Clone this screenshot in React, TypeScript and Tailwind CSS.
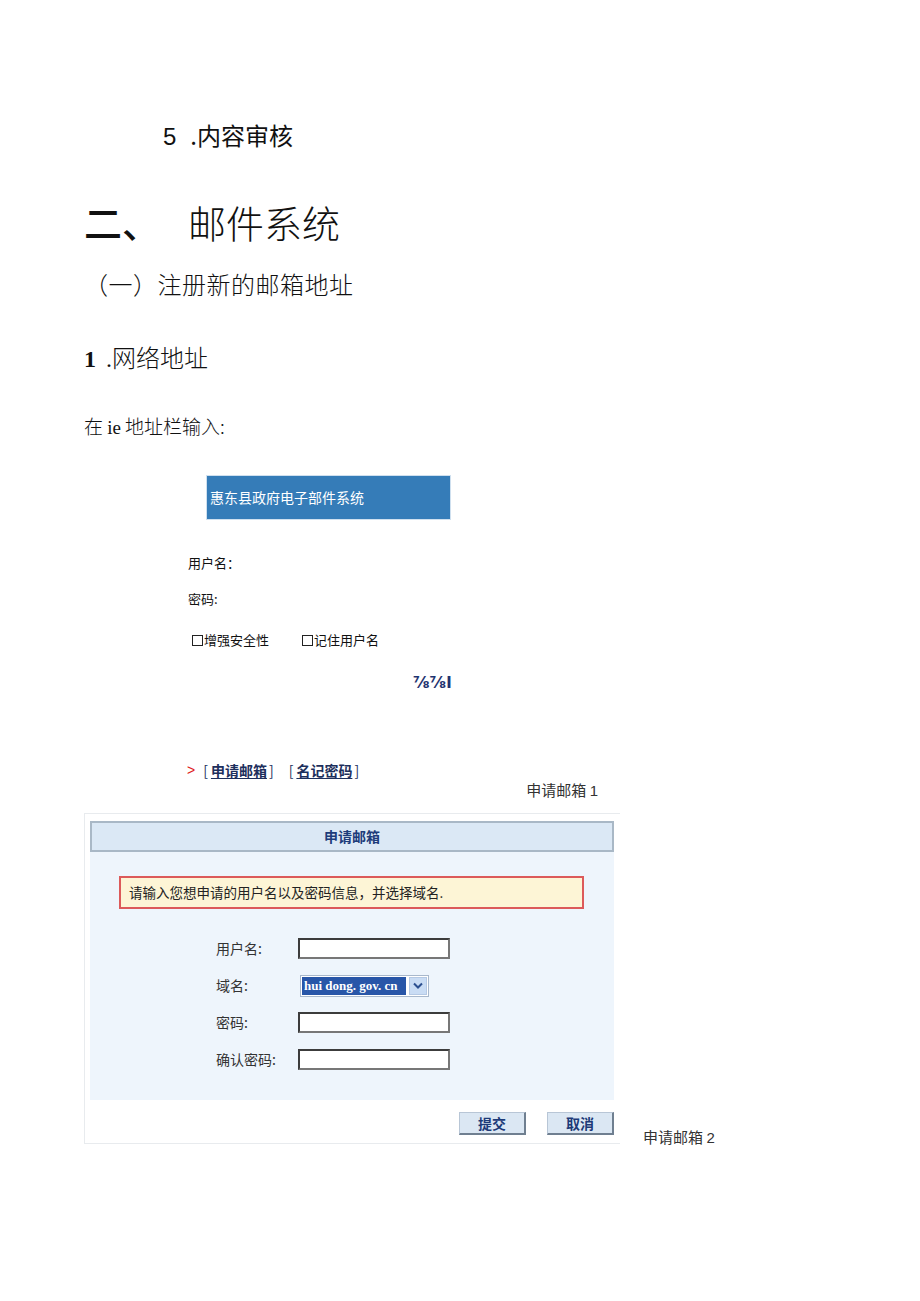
import React from "react";

const cjk = "font-['Noto_Sans_CJK_SC',sans-serif]";

function Field() {
  return <div className="h-[21px] w-[152px] border-2 border-[#3c3c3c] border-r-[#777] border-b-[#777] bg-white" />;
}

function FormRow({ label, children }: { label: string; children: React.ReactNode }) {
  return (
    <div className="flex h-[21px] items-center">
      <span className={`w-[82px] text-[14px] leading-[21px] text-[#333] ${cjk}`}>{label}</span>
      {children}
    </div>
  );
}

function Btn({ text }: { text: string }) {
  return (
    <div
      className={`flex h-[23px] w-[67px] items-center justify-center border border-[#b8c6d6] border-r-2 border-b-2 border-r-[#6f7f90] border-b-[#6f7f90] bg-[#dbe7f3] text-[14px] font-bold text-[#1d3a78] ${cjk}`}
    >
      {text}
    </div>
  );
}

export default function App() {
  return (
    <div className={`min-h-[1301px] w-[920px] bg-white pl-[84px] pt-[120px] text-[#111] ${cjk}`}>
      <div className="h-[30px] pl-[79px] text-[24px] leading-[30px]">
        <span className="font-['Liberation_Sans',sans-serif]">5</span>
        <span className="ml-[14px]">.内容审核</span>
      </div>

      <div className="mt-[50px] flex h-[44px] items-center text-[38px] leading-[44px]">
        <span className="w-[104px] font-medium">二、</span>
        <span className="font-light">邮件系统</span>
      </div>

      <div className="mt-[26px] h-[28px] text-[24px] font-light leading-[28px] tracking-[0.5px]">（一）注册新的邮箱地址</div>

      <div className="mt-[45px] h-[28px] text-[24px] font-light leading-[28px]">
        <span className="font-['Liberation_Serif',serif] font-bold">1</span>
        <span className="ml-[10px]">
          <b className="font-['Liberation_Serif',serif]">.</b>网络地址
        </span>
      </div>

      <div className="mt-[43px] h-[24px] text-[19px] font-light leading-[24px]">
        在 <span className="font-['Liberation_Serif',serif]">ie</span> 地址栏输入:
      </div>

      {/* screenshot 1 */}
      <div className="ml-[122px] mt-[37px] flex h-[45px] w-[245px] items-center border border-[#cfe0ef] bg-[#357cb8] pl-[3px] text-[14px] text-white">
        惠东县政府电子部件系统
      </div>

      <div className="ml-[104px] mt-[33px] h-[20px] text-[13px] leading-[20px]">用户名：</div>
      <div className="ml-[104px] mt-[16px] h-[20px] text-[13px] leading-[20px]">密码:</div>
      <div className="ml-[108px] mt-[21px] flex h-[20px] items-center text-[13px] leading-[20px]">
        <span className="flex items-center">
          <span className="mr-[1px] inline-block h-[11px] w-[11px] border border-[#222]" />
          增强安全性
        </span>
        <span className="ml-[33px] flex items-center">
          <span className="mr-[1px] inline-block h-[11px] w-[11px] border border-[#222]" />
          记住用户名
        </span>
      </div>
      <div className="ml-[329px] mt-[23px] h-[20px] font-['DejaVu_Sans',sans-serif] text-[16px] font-bold leading-[20px] text-[#1f3470]">
        ⅞⅞l
      </div>

      <div className="ml-[103px] mt-[67px] flex h-[20px] items-center text-[14px] font-bold leading-[20px] text-[#1d2f5c]">
        <span className="mr-[8px] font-['Liberation_Sans',sans-serif] font-normal text-[#e02020]">&gt;</span>
        <span className="mr-[3px] font-normal">[</span>
        <span className="underline underline-offset-2">申请邮箱</span>
        <span className="ml-[2px] font-normal">]</span>
        <span className="ml-[15px] mr-[3px] font-normal">[</span>
        <span className="underline underline-offset-2">名记密码</span>
        <span className="ml-[2px] font-normal">]</span>
      </div>
      <div className="h-[20px] w-[514px] text-right text-[15px] leading-[20px] text-[#333]">
        申请邮箱 <span className="font-['Liberation_Sans',sans-serif]">1</span>
      </div>

      {/* screenshot 2 */}
      <div className="mt-[13px] flex items-end">
        <div className="flex h-[331px] w-[536px] flex-col border-y border-l border-[#e8ebee] pl-[5px] pr-[6px] pt-[7px]">
          <div className="flex h-[31px] items-center justify-center border-2 border-[#a9b8c6] bg-[#dbe8f5] text-[14px] font-bold text-[#1d3c7a]">
            申请邮箱
          </div>
          <div className="flex h-[248px] flex-col bg-[#eef5fc] pl-[29px] pt-[24px]">
            <div className="flex h-[33px] w-[465px] items-center border-2 border-[#dc5a5a] bg-[#fdf5d6] pl-[8px] text-[13.5px] text-[#222]">
              请输入您想申请的用户名以及密码信息，并选择域名.
            </div>
            <div className="ml-[97px] mt-[29px] flex flex-col gap-[16px]">
              <FormRow label="用户名:">
                <Field />
              </FormRow>
              <FormRow label="域名:">
                <div className="ml-[2px] flex h-[22px] items-center border border-[#a8b8cc] bg-white p-[1px]">
                  <div className="flex h-[18px] w-[104px] items-center bg-[#2856a8] pl-[2px] font-['Liberation_Serif',serif] text-[13px] font-bold text-white">
                    hui dong. gov. cn
                  </div>
                  <div className="ml-[3px] flex h-[18px] w-[18px] items-center justify-center border border-[#b5c9e4] bg-[#c9dcf4]">
                    <svg width="10" height="7" viewBox="0 0 10 7">
                      <path d="M1 1.5 L5 5.5 L9 1.5" stroke="#2b4f8f" strokeWidth="2" fill="none" />
                    </svg>
                  </div>
                </div>
              </FormRow>
              <FormRow label="密码:">
                <Field />
              </FormRow>
              <FormRow label="确认密码:">
                <Field />
              </FormRow>
            </div>
          </div>
          <div className="flex justify-end gap-[21px] pt-[12px]">
            <Btn text="提交" />
            <Btn text="取消" />
          </div>
        </div>
        <div className="mb-[-3px] ml-[23px] h-[20px] text-[15px] leading-[20px] text-[#333]">
          申请邮箱 <span className="font-['Liberation_Sans',sans-serif]">2</span>
        </div>
      </div>
    </div>
  );
}
